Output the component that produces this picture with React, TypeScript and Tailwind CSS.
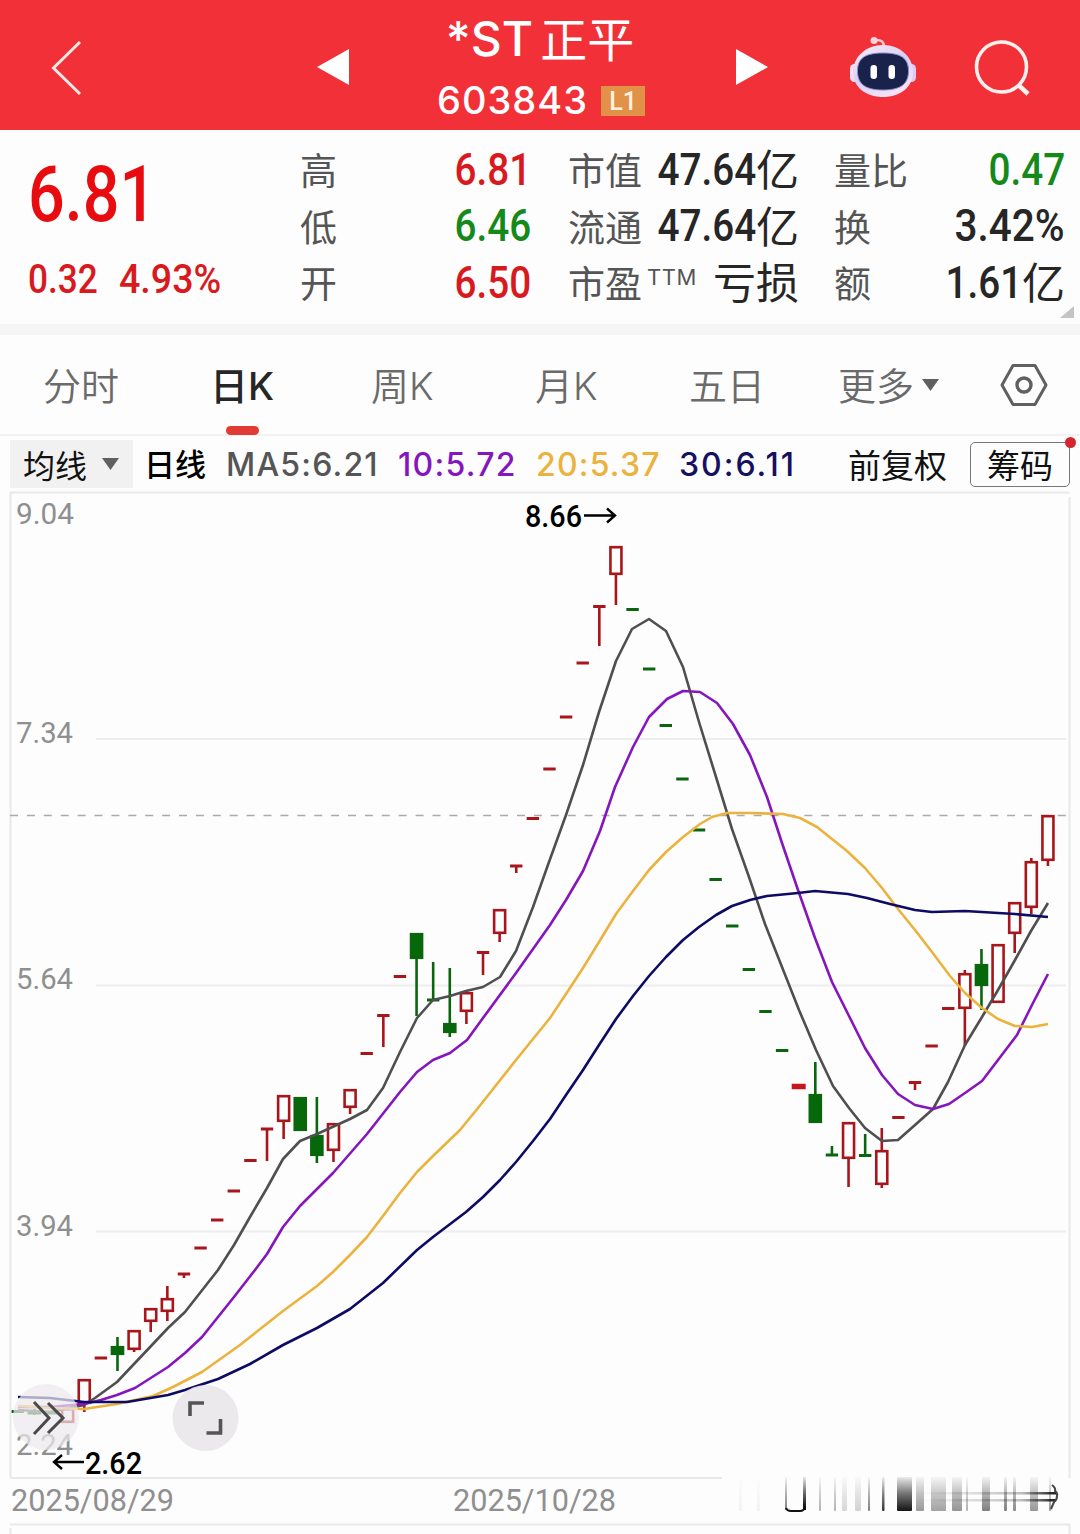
import clsx from "clsx";

type Candle = {
  color: "red" | "green";
  open: number;
  close: number;
  high?: number;
  low?: number;
};

const r = (open: number, close: number, high?: number, low?: number): Candle => ({ color: "red", open, close, high, low });
const g = (open: number, close: number, high?: number, low?: number): Candle => ({ color: "green", open, close, high, low });

// Body top, body bottom, wick top, wick bottom in chart units. Equal top and bottom is a flat session.
const candles: Candle[] = [
  g(1411.5, 1411.5),
  g(1411, 1413, 1409, 1415),
  g(1411, 1414),
  r(1408, 1423),
  r(1379, 1404, undefined, 1412),
  r(1358, 1358),
  g(1346, 1355, 1337, 1371),
  r(1330, 1350, undefined, 1352),
  r(1308, 1322, undefined, 1332),
  r(1298, 1312, 1286, 1321),
  r(1274, 1274, undefined, 1278),
  r(1248, 1248),
  r(1220, 1220),
  r(1191, 1191),
  r(1160.5, 1160.5),
  r(1129, 1129, undefined, 1161),
  r(1095, 1122, undefined, 1139),
  g(1097, 1131),
  g(1135, 1156, 1097, 1163),
  r(1123, 1151, undefined, 1162),
  r(1089, 1108, undefined, 1114),
  r(1053.5, 1053.5),
  r(1015.5, 1015.5, undefined, 1047),
  r(976.5, 976.5),
  g(933, 959, undefined, 1016),
  g(1000, 1000, 962),
  g(1023, 1033, 968, 1037),
  r(992, 1012, undefined, 1024),
  r(952.5, 952.5, undefined, 975),
  r(909, 934, undefined, 942),
  r(866, 866, undefined, 873),
  r(818.5, 818.5),
  r(769, 769),
  r(717, 717),
  r(663, 663),
  r(606.5, 606.5, undefined, 646),
  r(546, 575, undefined, 605),
  g(609.5, 609.5),
  g(669, 669),
  g(725.5, 725.5),
  g(779, 779),
  g(830, 830),
  g(879.5, 879.5),
  g(926, 926),
  g(969.5, 969.5),
  g(1011.5, 1011.5),
  g(1050.5, 1050.5),
  r(1086.5, 1086.5),
  g(1094, 1123, 1062),
  g(1155, 1155, 1146),
  r(1122, 1159, undefined, 1187),
  g(1155.5, 1155.5, 1134),
  r(1150, 1185, 1128, 1188),
  r(1117.5, 1117.5),
  r(1082.5, 1082.5, undefined, 1090),
  r(1046, 1046),
  r(1008.5, 1008.5),
  r(973, 1009, 970, 1046),
  g(964, 986, 949, 1010),
  r(944, 1003),
  r(902, 934, undefined, 953),
  r(861, 908, 858, 914),
  r(815, 861, undefined, 866),
];

const ma5 =
  "18,1410 50,1412 84,1405 95,1398 117,1382 134,1364 152,1345 168,1328 185,1312 218,1270 234,1245 250,1217 267,1188 283,1159 300,1141 317,1134 350,1119 367,1110 383,1088 400,1052 417,1018 433,1000 450,996 466,991 483,987 500,977 516,951 533,907 549,862 566,815 583,765 599,712 616,661 632,629 649,619 666,631 683,667 699,722 716,777 732,829 749,877 765,924 782,967 799,1010 816,1050 833,1086 849,1108 865,1128 882,1141 898,1140 915,1125 933,1109 948,1082 965,1045 982,1017 998,990 1015,960 1031,931 1048,903";
const ma10 =
  "18,1407 50,1407 84,1404 101,1400 117,1395 135,1388 168,1367 185,1353 202,1337 218,1317 234,1297 255,1270 267,1254 283,1227 300,1206 317,1189 333,1173 367,1134 400,1092 417,1072 433,1060 450,1053 467,1040 483,1018 516,973 550,925 566,900 583,871 600,831 615,787 633,747 649,717 667,699 683,691 700,692 717,703 733,724 750,755 767,797 782,843 798,890 815,938 832,982 849,1016 865,1048 882,1075 898,1094 915,1105 933,1109 949,1104 965,1093 982,1081 998,1060 1017,1035 1033,1003 1048,974";
const ma20 =
  "18,1406 50,1408 84,1409 117,1404 153,1396 173,1387 202,1372 240,1345 283,1311 317,1286 333,1272 350,1255 367,1237 383,1216 400,1193 417,1172 433,1156 460,1130 478,1108 516,1060 550,1018 566,994 583,968 599,942 616,914 633,891 649,870 666,852 683,837 700,824 712,817 727,813 750,813 783,814 800,818 817,827 847,851 865,868 882,888 898,909 915,930 932,952 950,976 965,993 982,1008 998,1019 1015,1026 1032,1027 1048,1024";
const ma30 =
  "18,1397 50,1398 84,1402 127,1402 168,1395 185,1390 218,1379 250,1364 283,1345 317,1328 350,1309 383,1283 417,1250 433,1237 466,1212 483,1197 500,1180 516,1162 533,1141 550,1119 566,1095 583,1070 599,1045 616,1019 633,996 649,976 666,957 683,940 699,927 716,915 732,906 750,900 767,896 798,893 815,891 848,894 867,898 890,904 915,910 932,912 965,911 1015,914 1048,917";

const stripes = [
  { x: 739, w: 3, o: 0.04 },
  { x: 757, w: 3, o: 0.04 },
  { x: 819, w: 2, o: 0.3 },
  { x: 834, w: 2, o: 0.3 },
  { x: 842, w: 5, o: 0.15 },
  { x: 855, w: 6, o: 0.17 },
  { x: 868, w: 2, o: 0.5 },
  { x: 882, w: 2.5, o: 0.8 },
  { x: 897, w: 15, o: 0.92 },
  { x: 916, w: 8, o: 0.4 },
  { x: 931, w: 15, o: 0.36 },
  { x: 952, w: 10, o: 0.42 },
  { x: 966, w: 2, o: 0.3 },
  { x: 982, w: 8, o: 0.5 },
  { x: 1004, w: 3, o: 0.5 },
  { x: 1013, w: 3, o: 0.45 },
  { x: 1030, w: 8, o: 0.4 },
  { x: 1049, w: 2, o: 0.4 },
];

function CandleMark({ candle, index }: { candle: Candle; index: number }) {
  const x = 17.8 + index * 16.615;
  const { open, close, high, low } = candle;
  const thick = index === 47;
  const stroke = candle.color === "green" ? "#0a650d" : thick ? "#c4161b" : "#a8161c";
  const half = thick ? 7 : 6.2;

  return (
    <g stroke={stroke} strokeWidth={2.6} fill="none">
      {high !== undefined && <path d={`M${x} ${high}V${open}`} />}
      {low !== undefined && <path d={`M${x} ${close}V${low}`} />}
      {open === close ? (
        <path d={`M${x - half} ${open}h${half * 2}`} strokeWidth={thick ? 5.5 : 3} />
      ) : (
        <rect
          x={x - 5.5}
          y={open + 1.2}
          width={11}
          height={Math.max(close - open - 2.4, 1)}
          fill={candle.color === "red" ? "#fdfdfd" : "#05690a"}
        />
      )}
    </g>
  );
}

function Label({ x, y, width, size = 30, fill = "#8f8f8f", children }: { x: number; y: number; width: number; size?: number; fill?: string; children: string }) {
  return (
    <text
      x={x}
      y={y}
      textLength={width}
      lengthAdjust="spacingAndGlyphs"
      fontSize={size}
      fill={fill}
      className={clsx("font-['Roboto',sans-serif]", fill === "#000" && "font-medium")}
    >
      {children}
    </text>
  );
}

function Chart() {
  return (
    <svg viewBox="0 490 1080 1044" className="block h-[1044px] w-[1080px]">
      <defs>
        <linearGradient id="fade" x1="0" y1="0" x2="0" y2="1">
          <stop offset="0" stopColor="#000" stopOpacity="0.08" />
          <stop offset="0.5" stopColor="#000" stopOpacity="0.6" />
          <stop offset="1" stopColor="#000" stopOpacity="1" />
        </linearGradient>
        <linearGradient id="shaft" x1="0" y1="0" x2="1" y2="0">
          <stop offset="0" stopColor="#000" stopOpacity="0" />
          <stop offset="0.75" stopColor="#000" stopOpacity="0.25" />
          <stop offset="1" stopColor="#000" stopOpacity="0.9" />
        </linearGradient>
      </defs>

      <g stroke="#e9e9e9" strokeWidth="2" fill="none">
        <path d="M10 492.5H1069.5M10.5 492V1478M1069.5 497V1478M10 1478H722M10 1524.5H1070M10.5 1528V1534M1069.5 1524V1534" />
        <path d="M96 739H1066M96 985.5H1066M96 1231.5H1066" stroke="#ededed" />
      </g>
      <path d="M10 815.5H1066" stroke="#aaa" strokeWidth="1.4" strokeDasharray="8 8.9" />

      <Label x={16} y={524} width={58}>9.04</Label>
      <Label x={16} y={743} width={57}>7.34</Label>
      <Label x={16} y={989} width={57}>5.64</Label>
      <Label x={16} y={1236} width={57}>3.94</Label>
      <Label x={16} y={1455} width={57}>2.24</Label>

      {candles.map((candle, i) => (
        <CandleMark key={i} candle={candle} index={i} />
      ))}

      <g fill="none" strokeWidth="2.6" strokeLinejoin="round">
        <polyline points={ma5} stroke="#4f4f4f" />
        <polyline points={ma10} stroke="#8516bd" />
        <polyline points={ma20} stroke="#ebb33e" />
        <polyline points={ma30} stroke="#0d0b63" />
      </g>

      <Label x={525} y={527} width={57} size={31} fill="#000">8.66</Label>
      <path d="M584 515.5h30M607 508.5l8 7-8 7" stroke="#000" strokeWidth="2.4" fill="none" />

      {/* floating chart controls */}
      <circle cx="46" cy="1417" r="33" fill="#ebe9ec" fillOpacity="0.72" />
      <path d="M34 1402l15 16-15 16M48 1403l15 15-15 15" stroke="#4a4a4a" strokeWidth="3" fill="none" />
      <circle cx="205.5" cy="1418" r="33" fill="#e9e7e9" fillOpacity="0.9" />
      <path d="M190 1416v-13h14M206.5 1433h14v-14" stroke="#555" strokeWidth="3.6" fill="none" />

      <Label x={85} y={1474} width={57} size={32} fill="#000">2.62</Label>
      <path d="M84 1462H54M62 1455l-8 7 8 7" stroke="#000" strokeWidth="2.4" fill="none" />

      <Label x={11} y={1511} width={163} size={31}>2025/08/29</Label>
      <Label x={453} y={1511} width={163} size={31}>2025/10/28</Label>

      <g>
        {stripes.map((s) => (
          <rect key={s.x} x={s.x} y={1477} width={s.w} height={34} rx={1} fill="url(#fade)" opacity={s.o} />
        ))}
        <rect x="785" y="1477" width="2" height="33" fill="url(#fade)" opacity="0.5" />
        <rect x="803" y="1477" width="3" height="33" fill="url(#fade)" />
        <path d="M786 1508q1 3 5 3h9q4 0 5-4" stroke="#111" strokeWidth="2" fill="none" />
        <rect x="920" y="1492" width="136" height="2.5" fill="url(#shaft)" />
        <rect x="920" y="1499" width="136" height="2.5" fill="url(#shaft)" />
        <path d="M1052 1485q4 3 3 6 3 2 2 5 0 4-3 6l-3 7" stroke="#444" strokeWidth="2" fill="none" />
      </g>
    </svg>
  );
}

function Robot() {
  return (
    <svg viewBox="0 0 68 62" className="h-[62px] w-[68px]">
      <defs>
        <linearGradient id="shell" x1="0" y1="0" x2="0.6" y2="1">
          <stop offset="0" stopColor="#fdeef4" />
          <stop offset="0.55" stopColor="#d9cff5" />
          <stop offset="1" stopColor="#f7e3f7" />
        </linearGradient>
      </defs>
      <path d="M26 4q9-1 9 7" stroke="#f7c8d2" strokeWidth="2.5" fill="none" />
      <circle cx="25" cy="4.5" r="3.5" fill="#fbd5dc" />
      <rect x="1" y="28" width="9" height="18" rx="4.5" fill="#f4dff4" />
      <rect x="58" y="28" width="9" height="18" rx="4.5" fill="#dccbf3" />
      <path d="M34 9c17 0 30 12 30 27S51 61 34 61 4 51 4 36 17 9 34 9z" fill="url(#shell)" />
      <path d="M34 17c19 0 25.500 6 25.500 18S53 54 34 54 8.500 47 8.500 35 15 17 34 17z" fill="#18224a" stroke="#8c8bcb" />
      <rect x="21.500" y="29" width="6.500" height="14" rx="3.2" fill="#fff" />
      <rect x="39.500" y="29" width="6.500" height="14" rx="3.2" fill="#fff" />
    </svg>
  );
}

function Header() {
  return (
    <header className="flex h-[130px] bg-[#f23038] text-white">
      <svg viewBox="0 0 32 56" className="mt-[40px] ml-[50px] h-[56px] w-[32px]">
        <path d="M30 2L3.500 28 30 54" stroke="#ffe9e6" strokeWidth="3" fill="none" />
      </svg>
      <svg viewBox="0 0 32 36" className="mt-[49px] ml-[235px] h-[36px] w-[32px]">
        <path d="M0 18L32 0v36z" fill="#fff" />
      </svg>
      <div className="ml-[61px] flex w-[260px] flex-col items-center">
        <div className="mt-[8px] flex h-[62px] items-center text-[46px] leading-none">
          <span className="font-['Inter',sans-serif] text-[48px] font-medium">*ST</span>
          <span className="-mt-[5px] ml-[7px] font-['Noto_Sans_CJK_SC',sans-serif] text-[47px] font-normal">正平</span>
        </div>
        <div className="flex h-[60px] items-center">
          <span className="ml-[2px] font-['Inter',sans-serif] text-[38px] leading-none font-medium tracking-[1px]">603843</span>
          <span className="mt-[2px] ml-[13px] flex h-[30px] w-[44px] items-center justify-center bg-[#e29248] font-['Roboto',sans-serif] text-[25px] leading-none font-medium text-[#fff3df]">
            L1
          </span>
        </div>
      </div>
      <svg viewBox="0 0 32 36" className="mt-[49px] ml-[66px] h-[36px] w-[32px]">
        <path d="M32 18L0 0v36z" fill="#fff" />
      </svg>
      <div className="mt-[36px] ml-[81px]">
        <Robot />
      </div>
      <svg viewBox="0 0 58 58" className="mt-[39px] ml-[57px] h-[58px] w-[58px]" fill="none" stroke="#fff0ee" strokeWidth="3.6">
        <circle cx="27.500" cy="28" r="25" />
        <path d="M44.500 46l9.500 9" strokeWidth="4.500" />
      </svg>
    </header>
  );
}

function Value({ children, unit, className }: { children?: string; unit?: string; className?: string }) {
  return (
    <span className={clsx("flex h-[56.500px] items-center justify-end whitespace-nowrap", className)}>
      {children && (
        <span
          className={clsx(
            "-mt-[3px] origin-right font-['Roboto',sans-serif] text-[44px] leading-none font-medium",
            children.endsWith("%") ? "scale-x-[0.92]" : "scale-x-[0.88]",
          )}
        >
          {children}
        </span>
      )}
      {unit && <span className="-mt-[7px] font-['Noto_Sans_CJK_SC',sans-serif] text-[43px] leading-none">{unit}</span>}
    </span>
  );
}

function Quote() {
  return (
    <section className="relative flex h-[194px] bg-[#fdfdfd] font-['Noto_Sans_CJK_SC',sans-serif] text-[37px] text-[#555]">
      <div className="w-[270px] pl-[28px] font-['Roboto',sans-serif] font-medium">
        <div className="mt-[25px] h-[80px] origin-left scale-x-[0.84] text-[77px] leading-[80px] whitespace-nowrap text-[#e80c10]">6.81</div>
        <div className="mt-[23px] flex text-[40px] leading-[44px] whitespace-nowrap text-[#d81a1f]">
          <span className="w-[91px] origin-left scale-x-[0.88]">0.32</span>
          <span className="origin-left scale-x-[0.94]">4.93%</span>
        </div>
      </div>
      <div className="ml-[30px] w-[37px] pt-[11px] leading-[56.500px]">
        <div>高</div>
        <div>低</div>
        <div>开</div>
      </div>
      <div className="w-[194px] pt-[13px]">
        <Value className="text-[#d81a1f]">6.81</Value>
        <Value className="text-[#16891b]">6.46</Value>
        <Value className="text-[#d81a1f]">6.50</Value>
      </div>
      <div className="ml-[37px] w-[130px] pt-[11px] leading-[56.500px] whitespace-nowrap">
        <div>市值</div>
        <div>流通</div>
        <div className="flex">
          市盈
          <span className="-mt-[5px] ml-[5px] font-['Inter',sans-serif] text-[22px] tracking-[0.600px]">TTM</span>
        </div>
      </div>
      <div className="w-[101px] pt-[13px] text-[#262626]">
        <Value unit="亿">47.64</Value>
        <Value unit="亿">47.64</Value>
        <Value unit="亏损" />
      </div>
      <div className="ml-[35px] w-[76px] pt-[11px] leading-[56.500px] whitespace-nowrap">
        <div>量比</div>
        <div>换</div>
        <div>额</div>
      </div>
      <div className="w-[155px] pt-[13px] text-[#262626]">
        <Value className="text-[#16891b]">0.47</Value>
        <Value>3.42%</Value>
        <Value unit="亿">1.61</Value>
      </div>
      <svg viewBox="0 0 14 12" className="absolute right-[6px] bottom-[6px] h-[12px] w-[14px]">
        <path d="M14 0v12H0z" fill="#c4c4c4" />
      </svg>
    </section>
  );
}

const tabs = [
  { label: "分时", cls: "ml-[43px] w-[167px]" },
  { label: "日K", cls: "w-[161px]" },
  { label: "周K", cls: "w-[164px]" },
  { label: "月K", cls: "w-[154px]" },
  { label: "五日", cls: "w-[149px]" },
  { label: "更多", cls: "w-[84px]" },
];

function Tabs() {
  return (
    <nav className="flex h-[101px] border-b-2 border-[#f2f2f2] bg-[#fdfdfd] font-['Inter','Noto_Sans_CJK_SC',sans-serif] text-[38px] leading-[102px] text-[#6a6a6a]">
      {tabs.map((tab) => {
        const active = tab.label === "日K";
        return (
          <div key={tab.label} className={clsx("relative shrink-0 whitespace-nowrap", tab.cls, active ? "font-medium text-[#262626]" : "font-[350]")}>
            {tab.label}
            {active && <span className="absolute top-[91px] left-[16px] h-[9px] w-[33px] rounded-full bg-[#e23a35]" />}
          </div>
        );
      })}
      <svg viewBox="0 0 17 12" className="mt-[44px] h-[12px] w-[17px]">
        <path d="M0 0h17l-8.500 12z" fill="#606060" />
      </svg>
      <svg viewBox="0 0 48 44" className="mt-[28px] ml-[61px] h-[44px] w-[48px]" fill="none" stroke="#606060" strokeWidth="3">
        <path d="M13 2.500h22L46 22 35 41.500H13L2 22z" strokeLinejoin="round" />
        <circle cx="24" cy="22" r="7" strokeWidth="3.400" />
      </svg>
    </nav>
  );
}

function Indicators() {
  return (
    <div className="flex h-[54px] bg-[#fdfdfd] font-['Noto_Sans_CJK_SC',sans-serif] text-[32px] leading-[48px] whitespace-nowrap text-[#111]">
      <div className="mt-[4px] ml-[10px] flex h-[48px] w-[123px] shrink-0 bg-[#f1f1f1] pl-[13px]">
        均线
        <svg viewBox="0 0 17 12" className="mt-[18px] ml-[15px] h-[12px] w-[17px]">
          <path d="M0 0h17l-8.500 12z" fill="#606060" />
        </svg>
      </div>
      <div className="mt-[3px] ml-[11px] w-[82px] shrink-0 text-[31px] font-medium text-black">日线</div>
      <div className="mt-[5px] flex font-['Inter',sans-serif] text-[32px] font-medium">
        <span className="w-[172px] tracking-[1.200px] text-[#555]">MA5:6.21</span>
        <span className="w-[138px] tracking-[1.300px] text-[#8516bd]">10:5.72</span>
        <span className="w-[143px] tracking-[1.200px] text-[#ebb33e]">20:5.37</span>
        <span className="w-[169px] tracking-[2px] text-[#15105f]">30:6.11</span>
      </div>
      <div className="mt-[4px] w-[122px] shrink-0 text-[33px]">前复权</div>
      <div className="relative mt-[6px] h-[45px] w-[100px] shrink-0 rounded-[5px] border-[1.500px] border-[#777] text-center text-[33px] leading-[42px]">
        筹码
        <span className="absolute -top-[6px] -right-[7px] size-[11px] rounded-full bg-[#d5252f]" />
      </div>
    </div>
  );
}

export default function App() {
  return (
    <main className="w-[1080px] overflow-hidden bg-[#fdfdfd]">
      <Header />
      <Quote />
      <div className="h-[11px] bg-[#f5f5f5]" />
      <Tabs />
      <Indicators />
      <Chart />
    </main>
  );
}
